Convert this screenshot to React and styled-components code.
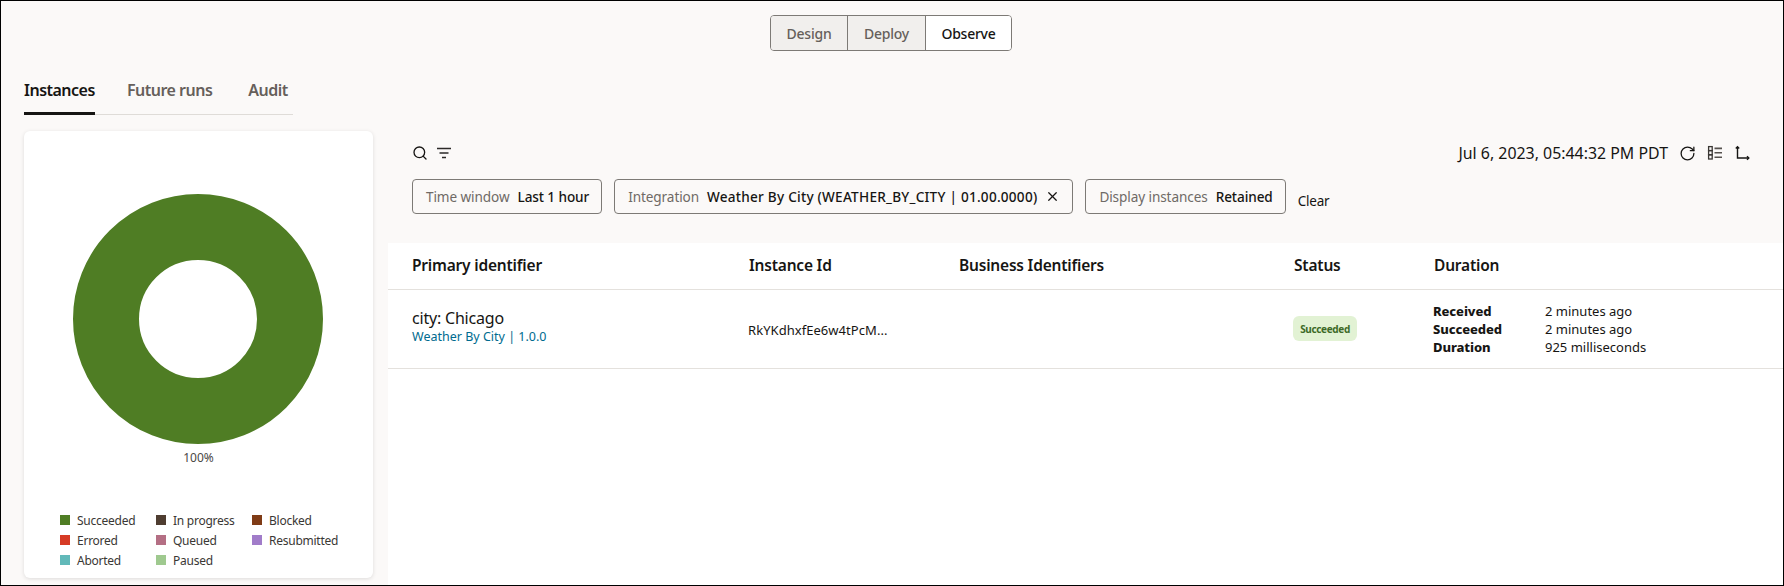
import styled, { createGlobalStyle } from "styled-components";
import { RotateCw, Search, X } from "lucide-react";

const GlobalStyle = createGlobalStyle`
    * {
        box-sizing: border-box;
    }
    html, body {
        margin: 0;
        padding: 0;
        overflow: hidden;
    }
    body {
        font-family: "Noto Sans", "Open Sans", Arial, sans-serif;
        color: #161513;
    }
`;

const Frame = styled.div`
    width: 1784px;
    height: 586px;
    border: 1px solid #000;
    background-color: #fbf9f8;
    display: flex;
    flex-direction: column;
    overflow: hidden;
`;

const TopBar = styled.div`
    display: flex;
    justify-content: center;
    padding: 14px 2px 0 0;
    height: 62px;
`;

const Segmented = styled.div`
    display: flex;
    height: 36px;
    border: 1px solid #7d7a76;
    border-radius: 4px;
    overflow: hidden;
`;

const Segment = styled.div`
    display: flex;
    align-items: center;
    justify-content: center;
    width: ${({ width }) => width}px;
    font-size: 14px;
    font-weight: 500;
    letter-spacing: -0.25px;
    color: ${({ active }) => (active ? "#161513" : "#665f5b")};
    background-color: ${({ active }) => (active ? "#fff" : "#f1efed")};
    & + & {
        border-left: 1px solid #7d7a76;
    }
`;

const Body = styled.div`
    flex: 1;
    display: grid;
    grid-template-columns: 387px 1fr;
    min-height: 0;
`;

const Side = styled.div`
    padding-left: 23px;
    display: flex;
    flex-direction: column;
`;

const Tabs = styled.div`
    width: 269px;
    height: 52px;
    display: flex;
    border-bottom: 1px solid #dfdcd8;
`;

const Tab = styled.div`
    height: 52px;
    padding-top: 16px;
    margin-right: ${({ gap }) => gap}px;
    font-size: 16px;
    font-weight: 600;
    letter-spacing: -0.5px;
    color: ${({ active }) => (active ? "#161513" : "#665f5b")};
    border-bottom: ${({ active }) => (active ? "3px solid #161513" : "none")};
`;

const ChartCard = styled.div`
    margin-top: 16px;
    width: 349px;
    height: 447px;
    background-color: #fff;
    border-radius: 6px;
    box-shadow: 0 1px 4px rgba(0, 0, 0, 0.12);
    display: flex;
    flex-direction: column;
    align-items: center;
    padding-top: 63px;
`;

const DonutWrap = styled.div`
    margin-right: 2px;
    height: 250px;
`;

const Percent = styled.div`
    margin-top: 6px;
    font-size: 12px;
    line-height: 16px;
    color: #4b4845;
`;

const Legend = styled.div`
    margin-top: 44px;
    align-self: flex-start;
    margin-left: 36px;
    display: grid;
    grid-template-columns: 96px 96px auto;
    grid-auto-rows: 20px;
`;

const LegendItem = styled.div`
    display: flex;
    align-items: center;
    gap: 7px;
    font-size: 12px;
    color: #3a3734;
    letter-spacing: -0.25px;
`;

const Swatch = styled.span`
    width: 10px;
    height: 10px;
    background-color: ${({ color }) => color};
`;

const Main = styled.div`
    display: flex;
    flex-direction: column;
    min-height: 0;
`;

const Toolbar = styled.div`
    height: 181px;
    margin-top: -1px;
    padding: 79px 33px 0 24px;
    display: flex;
    flex-direction: column;
`;

const ToolRow = styled.div`
    display: flex;
    align-items: center;
    justify-content: space-between;
    height: 24px;
`;

const IconGroup = styled.div`
    display: flex;
    align-items: center;
    gap: ${({ gap }) => gap}px;
`;

const DateText = styled.span`
    font-size: 15.9px;
`;

const ChipRow = styled.div`
    display: flex;
    align-items: flex-start;
    gap: 12px;
    margin-top: 14px;
`;

const Chip = styled.div`
    height: 35px;
    padding: 0 12px 0 13px;
    display: flex;
    align-items: center;
    gap: 8px;
    border: 1px solid #7d7a76;
    border-radius: 4px;
    font-size: 13.6px;
    white-space: nowrap;
    letter-spacing: -0.1px;
`;

const ChipLabel = styled.span`
    color: #6f6a66;
`;

const ChipValue = styled.span`
    color: #161513;
    font-weight: 500;
    letter-spacing: ${({ wide }) => (wide ? "0.24px" : "-0.1px")};
`;

const ClearLink = styled.span`
    font-size: 13.5px;
    margin-top: 13px;
    letter-spacing: -0.2px;
`;

const Table = styled.div`
    flex: 1;
    background-color: #fff;
`;

const Row = styled.div`
    height: ${({ height }) => height}px;
    padding-left: 24px;
    display: grid;
    grid-template-columns: 337px 210px 335px 140px 1fr;
    align-items: center;
    border-bottom: 1px solid #e4e1dd;
`;

const HeadCell = styled.div`
    font-size: 15.5px;
    font-weight: 600;
    letter-spacing: -0.2px;
    margin-top: -2px;
`;

const PrimaryCell = styled.div`
    padding-bottom: 5px;
`;

const CityName = styled.div`
    font-size: 16px;
    line-height: 20px;
    letter-spacing: -0.2px;
`;

const VersionLink = styled.div`
    font-size: 12.5px;
    line-height: 17px;
    color: #006b8f;
`;

const InstanceId = styled.div`
    font-size: 13px;
    margin: 1px 0 0 -1px;
    letter-spacing: 0.05px;
`;

const Badge = styled.div`
    width: 64px;
    height: 25px;
    margin: -1px 0 0 -1px;
    display: flex;
    align-items: center;
    justify-content: center;
    border-radius: 6px;
    background-color: #e2f2d4;
    color: #3d6a28;
    font-size: 10px;
    font-weight: 700;
    letter-spacing: -0.35px;
`;

const Details = styled.div`
    display: grid;
    margin-left: -1px;
    grid-template-columns: 112px auto;
    grid-auto-rows: 18px;
    align-items: center;
    font-size: 13px;
`;

const DetailLabel = styled.span`
    font-weight: 800;
    letter-spacing: -0.1px;
`;

const legendItems = [
    ["Succeeded", "#4f7d24"],
    ["In progress", "#4f3d31"],
    ["Blocked", "#7f3b16"],
    ["Errored", "#d63b25"],
    ["Queued", "#b46f84"],
    ["Resubmitted", "#a17cc9"],
    ["Aborted", "#62b9b9"],
    ["Paused", "#9fc98f"],
];

const filterChips = [
    ["Time window", "Last 1 hour"],
    ["Integration", "Weather By City (WEATHER_BY_CITY | 01.00.0000)"],
    ["Display instances", "Retained"],
];

const FilterIcon = () => (
    <svg width="16" height="14" viewBox="0 0 16 14" fill="none" stroke="#2c2a28" strokeWidth="1.6">
        <path d="M1 2.5h14M3.5 7h9M6 11.5h4" />
    </svg>
);

const ListIcon = () => (
    <svg width="16" height="16" viewBox="0 0 16 16" fill="none" stroke="#3a3734" strokeWidth="1.3">
        <rect x="1.6" y="1.6" width="3.6" height="4" />
        <rect x="1.6" y="5.6" width="3.6" height="4.2" />
        <rect x="1.6" y="9.8" width="3.6" height="4.2" />
        <path d="M7.5 3.4h7.5M7.5 7.8h7.5M7.5 12.2h7.5" strokeWidth="1.6" stroke="#55514d" />
    </svg>
);

const AxesIcon = () => (
    <svg width="16" height="16" viewBox="0 0 16 16" fill="none" stroke="#161513" strokeWidth="1.4">
        <path d="M3.5 2v11h11" />
        <path d="M1.8 3.6 3.5 1.8l1.7 1.8M13 11.3l1.8 1.7-1.8 1.7" />
    </svg>
);

const Donut = () => (
    <svg width="250" height="250" viewBox="0 0 250 250">
        <circle cx="125" cy="125" r="92" fill="none" stroke="#4f7d24" strokeWidth="66" />
    </svg>
);

export default function App() {
    return (
        <>
            <GlobalStyle />
            <Frame>
                <TopBar>
                    <Segmented>
                        <Segment width={76}>Design</Segment>
                        <Segment width={78}>Deploy</Segment>
                        <Segment width={86} active>Observe</Segment>
                    </Segmented>
                </TopBar>
                <Body>
                    <Side>
                        <Tabs>
                            <Tab active gap={32}>Instances</Tab>
                            <Tab gap={36}>Future runs</Tab>
                            <Tab gap={0}>Audit</Tab>
                        </Tabs>
                        <ChartCard>
                            <DonutWrap>
                                <Donut />
                            </DonutWrap>
                            <Percent>100%</Percent>
                            <Legend>
                                {legendItems.map(([name, color]) => (
                                    <LegendItem key={name}>
                                        <Swatch color={color} />
                                        {name}
                                    </LegendItem>
                                ))}
                            </Legend>
                        </ChartCard>
                    </Side>
                    <Main>
                        <Toolbar>
                            <ToolRow>
                                <IconGroup gap={8}>
                                    <Search size={16} color="#161513" strokeWidth={2} />
                                    <FilterIcon />
                                </IconGroup>
                                <IconGroup gap={11}>
                                    <DateText>Jul 6, 2023, 05:44:32 PM PDT</DateText>
                                    <RotateCw size={17} color="#161513" strokeWidth={1.8} />
                                    <ListIcon />
                                    <AxesIcon />
                                </IconGroup>
                            </ToolRow>
                            <ChipRow>
                                {filterChips.map(([label, value]) => (
                                    <Chip key={label}>
                                        <ChipLabel>{label}</ChipLabel>
                                        <ChipValue wide={label === "Integration"}>{value}</ChipValue>
                                        {label === "Integration" && <X size={15} color="#161513" />}
                                    </Chip>
                                ))}
                                <ClearLink>Clear</ClearLink>
                            </ChipRow>
                        </Toolbar>
                        <Table>
                            <Row height={47}>
                                <HeadCell>Primary identifier</HeadCell>
                                <HeadCell>Instance Id</HeadCell>
                                <HeadCell>Business Identifiers</HeadCell>
                                <HeadCell>Status</HeadCell>
                                <HeadCell>Duration</HeadCell>
                            </Row>
                            <Row height={79}>
                                <PrimaryCell>
                                    <CityName>city: Chicago</CityName>
                                    <VersionLink>Weather By City | 1.0.0</VersionLink>
                                </PrimaryCell>
                                <InstanceId>RkYKdhxfEe6w4tPcM...</InstanceId>
                                <div />
                                <Badge>Succeeded</Badge>
                                <Details>
                                    <DetailLabel>Received</DetailLabel>
                                    <span>2 minutes ago</span>
                                    <DetailLabel>Succeeded</DetailLabel>
                                    <span>2 minutes ago</span>
                                    <DetailLabel>Duration</DetailLabel>
                                    <span>925 milliseconds</span>
                                </Details>
                            </Row>
                        </Table>
                    </Main>
                </Body>
            </Frame>
        </>
    );
}
